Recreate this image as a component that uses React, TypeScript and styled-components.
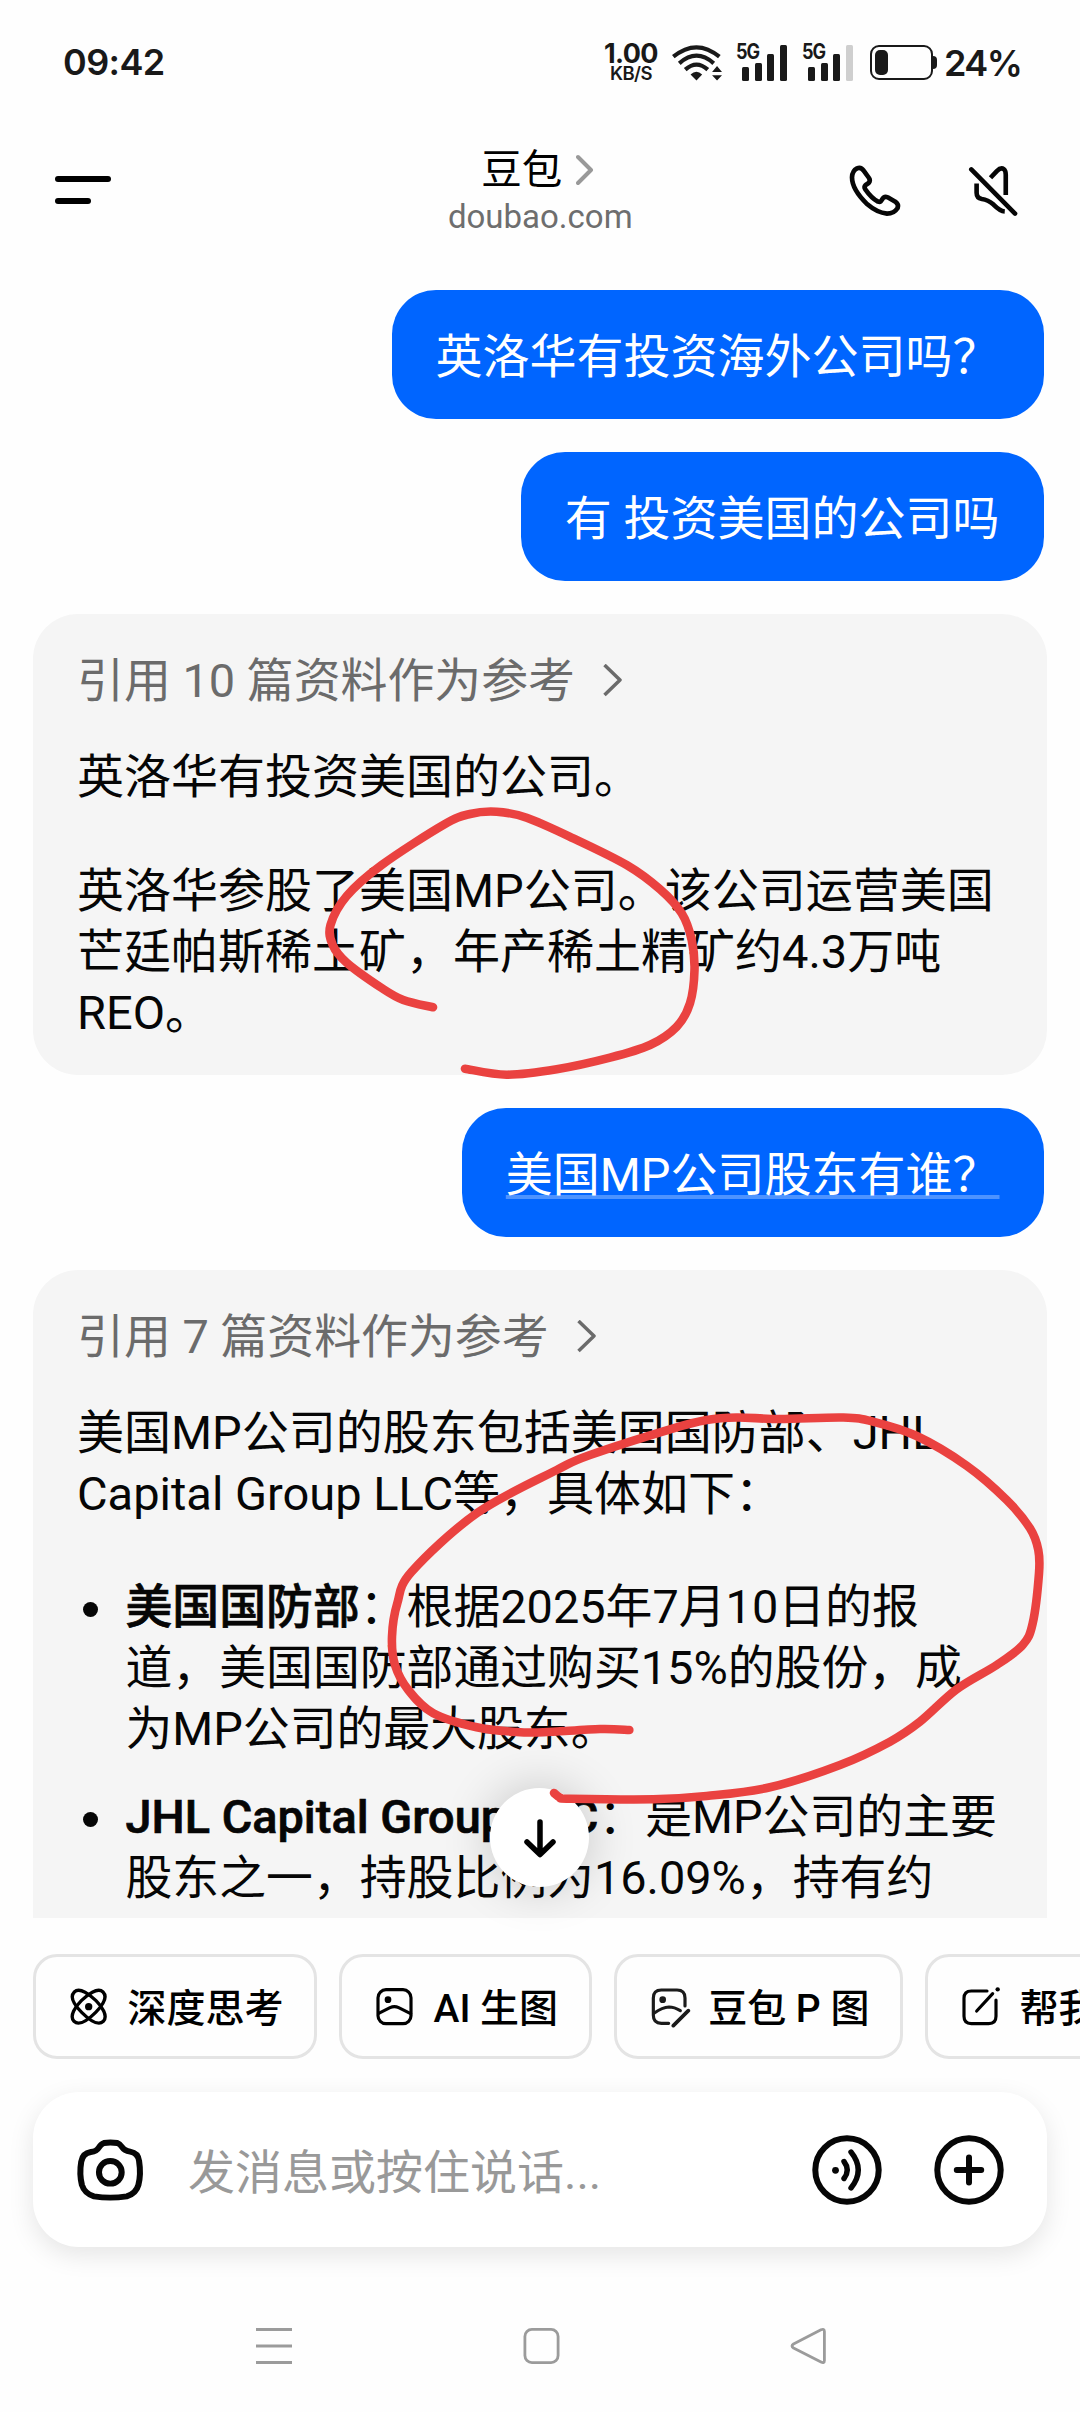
import React from 'react';
import styled, { createGlobalStyle } from 'styled-components';

const GlobalStyle = createGlobalStyle`
  * { box-sizing: border-box; }
  body { margin: 0; background: #fefefe; }
  p, ul, li { margin: 0; padding: 0; list-style: none; }
  svg { display: block; flex: none; }
`;

const Screen = styled.div`
  position: relative;
  display: flex;
  flex-direction: column;
  width: 1080px;
  height: 2412px;
  overflow: hidden;
  background: #fefefe;
  color: #060606;
  font-family: Roboto, 'Noto Sans CJK SC', sans-serif;
`;

/* ---------- status bar ---------- */

const StatusBar = styled.div`
  display: flex;
  align-items: center;
  justify-content: space-between;
  height: 124px;
  padding: 0 56px 0 63px;
  font-family: Inter, sans-serif;
  font-weight: 600;
  color: #191919;
`;

const Clock = styled.span`
  font-size: 36px;
  letter-spacing: -0.6px;
`;

const StatusIcons = styled.div`
  display: flex;
  align-items: center;
`;

const Speed = styled.div`
  display: flex;
  flex-direction: column;
  align-items: center;
  width: 54px;
  margin-right: 14px;
  font-size: 27px;
  font-weight: 700;
  line-height: 22px;
  letter-spacing: -0.6px;
`;

const SpeedUnit = styled.span`
  font-size: 18.5px;
  font-weight: 600;
  line-height: 17px;
  letter-spacing: -0.6px;
`;

const Signal = styled.div`
  position: relative;
  display: flex;
  align-items: flex-end;
  gap: 5.7px;
  width: 52px;
  height: 37px;
  padding-left: 6px;
  margin-left: 14px;
`;

const SignalLabel = styled.span`
  position: absolute;
  left: 0;
  top: 0;
  font-size: 21px;
  font-weight: 700;
  line-height: 16px;
  letter-spacing: -1.2px;
  transform: scaleX(0.86);
  transform-origin: left;
`;

const SignalBar = styled.i<{ $h: number; $dim?: boolean }>`
  width: 7px;
  height: ${(p) => p.$h}px;
  border-radius: 1.5px;
  background: ${(p) => (p.$dim ? '#cfcfcf' : '#191919')};
`;

const Battery = styled.div`
  display: flex;
  align-items: center;
  margin: 0 7px 0 16px;
`;

const BatteryCase = styled.div`
  width: 63px;
  height: 35px;
  padding: 3px;
  border: 2px solid #191919;
  border-radius: 9px;
`;

const BatteryLevel = styled.div`
  width: 13px;
  height: 25px;
  border-radius: 5px;
  background: #191919;
`;

const BatteryTip = styled.div`
  width: 4px;
  height: 13px;
  border-radius: 0 4px 4px 0;
  background: #191919;
`;

const Percent = styled.span`
  width: 80px;
  font-size: 36px;
  letter-spacing: -1.5px;
  line-height: 40px;
  padding-top: 2px;
  white-space: nowrap;
`;

/* ---------- header ---------- */

const Header = styled.header`
  display: grid;
  grid-template-columns: 1fr auto 1fr;
  align-items: center;
  height: 132px;
  padding: 0 60.5px 0 55px;
`;

const MenuButton = styled.div`
  display: flex;
  flex-direction: column;
  gap: 16px;
`;

const MenuLine = styled.i<{ $w: number }>`
  width: ${(p) => p.$w}px;
  height: 6px;
  border-radius: 3px;
  background: #000;
`;

const TitleBlock = styled.div`
  display: flex;
  flex-direction: column;
  align-items: center;
  padding: 4px 0 0 6px;
`;

const Title = styled.div`
  display: flex;
  align-items: center;
  gap: 14px;
  margin-right: 5px;
  font-size: 40.5px;
  line-height: 50px;
  color: #000;
`;

const Subtitle = styled.div`
  font-size: 33px;
  line-height: 44px;
  color: #6e6e6e;
`;

const HeaderActions = styled.div`
  display: flex;
  justify-content: flex-end;
  align-items: center;
  gap: 64px;
`;

/* ---------- conversation ---------- */

const Conversation = styled.main`
  display: flex;
  flex-direction: column;
  align-items: flex-start;
  gap: 33px;
  height: 1662px;
  padding: 34px 33px 0;
  overflow: hidden;
  font-size: 47px;
  line-height: 61px;
  white-space: pre;
`;

const UserBubble = styled.div`
  align-self: flex-end;
  flex: none;
  height: 129px;
  margin-right: 3px;
  padding: 36px 44.5px 32px 43.5px;
  border-radius: 44px;
  background: #0065ff;
  color: #fff;
`;

const Highlighted = styled.span`
  text-decoration: underline;
  text-decoration-color: rgba(255, 255, 255, 0.3);
  text-decoration-thickness: 4px;
  text-decoration-skip-ink: none;
  text-underline-offset: 4px;
`;

const AnswerCard = styled.section<{ $minHeight?: number }>`
  flex: none;
  width: 1014px;
  min-height: ${(p) => p.$minHeight ?? 0}px;
  padding: 36px 44px 32px;
  border-radius: 45px;
  background: #f5f5f5;
`;

const Sources = styled.div`
  display: flex;
  align-items: center;
  gap: 28px;
  margin-bottom: 35px;
  font-size: 46.9px;
  color: #6b6b6b;
`;

const Paragraph = styled.p`
  & + & { margin-top: 53px; }
`;

const Bullets = styled.ul`
  display: flex;
  flex-direction: column;
  gap: 27px;
  margin-top: 53px;
  font-size: 46.85px;
`;

const Bullet = styled.li`
  display: flex;
  gap: 28px;
  padding-left: 5.5px;
`;

const Dot = styled.i`
  flex: none;
  width: 15px;
  height: 15px;
  margin-top: 25px;
  border-radius: 50%;
  background: #060606;
`;

const Strong = styled.strong`
  font-weight: 500;
  -webkit-text-stroke: 0.7px currentColor;
`;

/* ---------- bottom controls ---------- */

const ChipRow = styled.div`
  display: flex;
  gap: 22px;
  height: 105px;
  margin: 36px 0 33px;
  padding-left: 33px;
`;

const Chip = styled.button`
  display: flex;
  flex: none;
  align-items: center;
  gap: 17.5px;
  height: 105px;
  padding: 0 30.5px 0 31px;
  border: 3px solid #e4e4e4;
  border-radius: 24px;
  background: #fefefe;
  color: #000;
  font: 500 39px/50px Roboto, 'Noto Sans CJK SC', sans-serif;
  white-space: nowrap;
`;

const ChipLabel = styled.span`
  padding-top: 5px;
`;

const InputBar = styled.div`
  display: flex;
  align-items: center;
  height: 155px;
  margin: 0 33px;
  padding: 0 43px 0 41px;
  border-radius: 46px;
  background: #fff;
  box-shadow: 0 8px 26px rgba(0, 0, 0, 0.1);
`;

const Placeholder = styled.span`
  flex: 1;
  margin-left: 41px;
  padding-top: 5px;
  font-size: 47px;
  line-height: 61px;
  color: #999;
`;

const InputActions = styled.div`
  display: flex;
  gap: 52px;
`;

const NavBar = styled.nav`
  display: flex;
  align-items: center;
  justify-content: space-between;
  height: 165px;
  padding: 33px 253px 0 255px;
`;

/* ---------- overlays ---------- */

const ScrollDown = styled.button`
  position: absolute;
  left: 490px;
  top: 1788px;
  display: flex;
  align-items: center;
  justify-content: center;
  width: 99px;
  height: 99px;
  padding: 0;
  border: 0;
  border-radius: 50%;
  background: #fff;
  box-shadow: 0 0 50px rgba(0, 0, 0, 0.2);
`;

const Ink = styled.svg`
  position: absolute;
  inset: 0;
  pointer-events: none;
`;

type Point = [number, number];

const firstLoop: Point[] = [
  [433, 1007.3], [403.3, 1000], [381.7, 988], [346.7, 962.7], [332.7, 945], [330.5, 925],
  [346.7, 896], [381.7, 865], [443.3, 825], [470, 814], [496.7, 811.7], [526.7, 817.7],
  [573.3, 838.3], [626.7, 865], [660, 889.3], [681.7, 913.3], [691.7, 940], [694.5, 970],
  [690, 1003.3], [676.7, 1026.7], [650, 1045], [610, 1057.7], [556.7, 1069.3], [506.7, 1074.7],
  [465, 1068.7],
];

const secondLoop: Point[] = [
  [629.3, 1730], [600, 1729], [543.3, 1732.3], [516.7, 1732], [476.7, 1727.3], [433.3, 1713.3],
  [408.3, 1690], [395, 1665], [392, 1636.7], [397.3, 1603.3], [411.7, 1571.7], [476.7, 1513.3],
  [556.7, 1470], [590, 1455], [673.3, 1428.3], [706.7, 1420], [736.7, 1417.5], [780, 1419],
  [843.3, 1417.5], [873.3, 1421.7], [916.7, 1436], [966.7, 1465.7], [1006.7, 1500], [1030, 1528.3],
  [1038.3, 1550], [1039, 1573.3], [1032.7, 1623.3], [1022.7, 1645], [996.7, 1665], [956.7, 1689.3],
  [920, 1721.7], [890, 1741.7], [840, 1765], [770, 1787.3], [706.7, 1796], [653.3, 1799.3],
  [570, 1798.7], [560, 1797.5], [554, 1793],
];

/* Catmull-Rom spline through the pen samples */
const smooth = (pts: Point[]) =>
  pts.slice(0, -1).reduce((d, p1, i) => {
    const p0 = pts[i - 1] ?? p1;
    const p2 = pts[i + 1];
    const p3 = pts[i + 2] ?? p2;
    const c1 = [p1[0] + (p2[0] - p0[0]) / 6, p1[1] + (p2[1] - p0[1]) / 6];
    const c2 = [p2[0] - (p3[0] - p1[0]) / 6, p2[1] - (p3[1] - p1[1]) / 6];
    return `${d} C${c1.join(' ')} ${c2.join(' ')} ${p2.join(' ')}`;
  }, `M${pts[0].join(' ')}`);

/* ---------- icons ---------- */

const line = {
  fill: 'none',
  stroke: 'currentColor',
  strokeLinecap: 'round' as const,
  strokeLinejoin: 'round' as const,
};

const WifiIcon = () => (
  <svg width="50" height="37" viewBox="275 69 151 111" {...line} strokeWidth="12.5" strokeLinecap="butt">
    <path d="M279 107 Q349 50 418 107" />
    <path d="M297 127 Q349 81 401 127" />
    <path d="M315 146 Q349 116 383 146" />
    <path d="M331 161 Q349 144 366 161 L349 179Z" fill="currentColor" stroke="none" />
    <path d="M396 153 L411 135 L426 153Z M396 163 L426 163 L411 179Z" fill="currentColor" stroke="none" />
  </svg>
);

const PhoneIcon = () => (
  <svg width="56" height="55" viewBox="800 425 168 165" {...line} strokeWidth="14">
    <path d="M850 448 L866 470 Q871 478 865 485 L856 491 Q850 497 855 504 Q873 530 893 541 Q901 544 905 535 Q911 524 922 528 L945 541 Q956 549 952 560 Q941 577 920 577 Q890 574 861 549 Q815 505 815 468 Q816 448 830 441 Q842 436 850 448Z" />
  </svg>
);

const MuteIcon = () => (
  <svg width="53" height="55" viewBox="1160 425 160 165" {...line} strokeWidth="14" strokeLinecap="butt">
    <path d="M1173 444 L1305 577" strokeLinecap="round" />
    <path d="M1231 469 L1250 449 Q1262 437 1271 443 Q1277 447 1277 460 V521" />
    <path d="M1189 486 V514 Q1189 530 1205 533 Q1223 535 1240 550 Q1260 570 1274 571" />
  </svg>
);

const AtomIcon = () => (
  <svg width="43" height="43" viewBox="191 166 129 129" {...line} strokeWidth="10">
    <path d="M213 187 C229 171 261 196 278 213 C296 231 315 259 300 275 C284 290 255 268 235 248 C214 227 198 202 213 187Z" />
    <path d="M299 187 C283 171 251 196 234 213 C216 231 197 259 212 275 C228 290 257 268 277 248 C298 227 314 202 299 187Z" />
    <circle cx="256" cy="231" r="11" fill="currentColor" stroke="none" />
  </svg>
);

const PictureIcon = () => (
  <svg width="43" height="43" viewBox="1077 166 129 129" {...line} strokeWidth="9.5">
    <rect x="1092" y="180" width="99" height="102" rx="24" />
    <circle cx="1122" cy="210" r="10" fill="currentColor" stroke="none" />
    <path d="M1094 251 L1128 234 Q1141 228 1154 234 L1190 252" />
  </svg>
);

const RetouchIcon = () => (
  <svg width="43" height="43" viewBox="305 166 129 129" {...line} strokeWidth="9.5" color="#1b1b1b">
    <path d="M367 281 H345 Q321 281 321 257 V205 Q321 181 345 181 H392 Q416 181 416 205 V229" />
    <circle cx="349" cy="210" r="10" fill="currentColor" stroke="none" />
    <path d="M324 250 Q348 233 368 232 Q384 232 402 243" />
    <path d="M381 288 L426 243" strokeWidth="11" />
  </svg>
);

const ComposeIcon = () => (
  <svg width="43" height="43" viewBox="1208 166 129 129" {...line} strokeWidth="9.5">
    <path d="M1292 184 H1245 Q1223 184 1223 206 V260 Q1223 282 1245 282 H1297 Q1319 282 1319 260 V211" />
    <path d="M1261 244 L1309 192" />
    <circle cx="1324" cy="179" r="6.5" fill="currentColor" stroke="none" />
  </svg>
);

const CameraIcon = () => (
  <svg width="73" height="68" viewBox="215 615 212 204" preserveAspectRatio="none" {...line} strokeWidth="17.5">
    <path d="M302 636 Q320 633 341 636 Q349 639 355 649 Q361 659 378 662 Q401 666 404 690 Q410 730 402 762 Q395 788 368 796 Q320 804 273 796 Q246 788 238 762 Q230 728 236 692 Q240 667 264 663 Q281 661 287 650 Q293 639 302 636Z" />
    <ellipse cx="320.5" cy="724" rx="33" ry="34" />
  </svg>
);

const VoiceIcon = () => (
  <svg width="70" height="70" viewBox="0 0 70 70" {...line} strokeWidth="6">
    <circle cx="35" cy="35" r="31.7" />
    <circle cx="23.5" cy="35.3" r="3.4" fill="currentColor" stroke="none" />
    <path d="M32 26.5 Q38.5 35 32 43.5 M39 17 Q53.5 35 39 53" strokeWidth="5.4" />
  </svg>
);

const PlusIcon = () => (
  <svg width="70" height="70" viewBox="0 0 70 70" {...line} strokeWidth="6">
    <circle cx="35" cy="35" r="31.7" />
    <path d="M35 22.5 V47.5 M22.8 35 H47.2" />
  </svg>
);

const SourceChevron = () => (
  <svg width="20" height="34" viewBox="0 0 20 34" {...line} strokeWidth="3.5" strokeLinecap="butt">
    <path d="M1.5 1 L17 16 L1.5 31" />
  </svg>
);

const TitleChevron = () => (
  <svg width="18" height="32" viewBox="0 0 18 32" {...line} strokeWidth="4" stroke="#999">
    <path d="M2 3 L15 16 L2 29" />
  </svg>
);

const SignalMeter = ({ weak }: { weak?: boolean }) => (
  <Signal>
    <SignalLabel>5G</SignalLabel>
    <SignalBar $h={14} />
    <SignalBar $h={18} />
    <SignalBar $h={27} />
    <SignalBar $h={36} $dim={weak} />
  </Signal>
);

const chips = [
  { icon: <AtomIcon />, label: '深度思考' },
  { icon: <PictureIcon />, label: 'AI 生图' },
  { icon: <RetouchIcon />, label: '豆包 P 图' },
  { icon: <ComposeIcon />, label: '帮我写作' },
];

export default function App() {
  return (
    <Screen>
      <GlobalStyle />
      <StatusBar>
        <Clock>09:42</Clock>
        <StatusIcons>
          <Speed>
            1.00
            <SpeedUnit>KB/S</SpeedUnit>
          </Speed>
          <WifiIcon />
          <SignalMeter />
          <SignalMeter weak />
          <Battery>
            <BatteryCase>
              <BatteryLevel />
            </BatteryCase>
            <BatteryTip />
          </Battery>
          <Percent>24%</Percent>
        </StatusIcons>
      </StatusBar>

      <Header>
        <MenuButton>
          <MenuLine $w={56} />
          <MenuLine $w={36} />
        </MenuButton>
        <TitleBlock>
          <Title>
            豆包
            <TitleChevron />
          </Title>
          <Subtitle>doubao.com</Subtitle>
        </TitleBlock>
        <HeaderActions>
          <PhoneIcon />
          <MuteIcon />
        </HeaderActions>
      </Header>

      <Conversation>
        <UserBubble>英洛华有投资海外公司吗？</UserBubble>
        <UserBubble>有 投资美国的公司吗</UserBubble>
        <AnswerCard>
          <Sources>
            引用 10 篇资料作为参考
            <SourceChevron />
          </Sources>
          <Paragraph>英洛华有投资美国的公司。</Paragraph>
          <Paragraph>{'英洛华参股了美国MP公司。该公司运营美国\n芒廷帕斯稀土矿，年产稀土精矿约4.3万吨\nREO。'}</Paragraph>
        </AnswerCard>
        <UserBubble>
          <Highlighted>美国MP公司股东有谁？</Highlighted>
        </UserBubble>
        <AnswerCard $minHeight={760}>
          <Sources>
            引用 7 篇资料作为参考
            <SourceChevron />
          </Sources>
          <Paragraph>{'美国MP公司的股东包括美国国防部、JHL\nCapital Group LLC等，具体如下：'}</Paragraph>
          <Bullets>
            <Bullet>
              <Dot />
              <p>
                <Strong>美国国防部</Strong>
                {'：根据2025年7月10日的报\n道，美国国防部通过购买15%的股份，成\n为MP公司的最大股东。'}
              </p>
            </Bullet>
            <Bullet>
              <Dot />
              <p>
                <Strong>JHL Capital Group LLC</Strong>
                {'：是MP公司的主要\n股东之一，持股比例为16.09%，持有约'}
              </p>
            </Bullet>
          </Bullets>
        </AnswerCard>
      </Conversation>

      <ChipRow>
        {chips.map((c) => (
          <Chip key={c.label}>
            {c.icon}
            <ChipLabel>{c.label}</ChipLabel>
          </Chip>
        ))}
      </ChipRow>

      <InputBar>
        <CameraIcon />
        <Placeholder>发消息或按住说话...</Placeholder>
        <InputActions>
          <VoiceIcon />
          <PlusIcon />
        </InputActions>
      </InputBar>

      <NavBar>
        <svg width="38" height="38" viewBox="0 0 38 38" fill="none" stroke="#9b9b9b" strokeWidth="3">
          <path d="M1 2.5 H37 M1 19 H37 M1 35.5 H37" />
        </svg>
        <svg width="38" height="38" viewBox="0 0 38 38" fill="none" stroke="#9b9b9b" strokeWidth="2.8">
          <rect x="2.9" y="2.4" width="33.2" height="33.2" rx="7" />
        </svg>
        <svg width="38" height="38" viewBox="0 0 38 38" fill="none" stroke="#9b9b9b" strokeWidth="2.8" strokeLinejoin="round">
          <path d="M32 2.8 Q35.4 1.2 35.4 4.5 V33.5 Q35.4 36.8 32 35 L4.5 21 Q1.5 19 4.5 17Z" />
        </svg>
      </NavBar>

      <ScrollDown>
        <svg width="36" height="42" viewBox="0 0 36 42" {...line} stroke="#000" strokeWidth="5.5">
          <path d="M18 5 V37 M5 25 L18 37.5 L31 25" />
        </svg>
      </ScrollDown>

      <Ink width="1080" height="2412" viewBox="0 0 1080 2412" fill="none" stroke="#ea4240" strokeWidth="8.6" strokeLinecap="round" strokeLinejoin="round">
        <path d={smooth(firstLoop)} />
        <path d={smooth(secondLoop)} />
      </Ink>
    </Screen>
  );
}
